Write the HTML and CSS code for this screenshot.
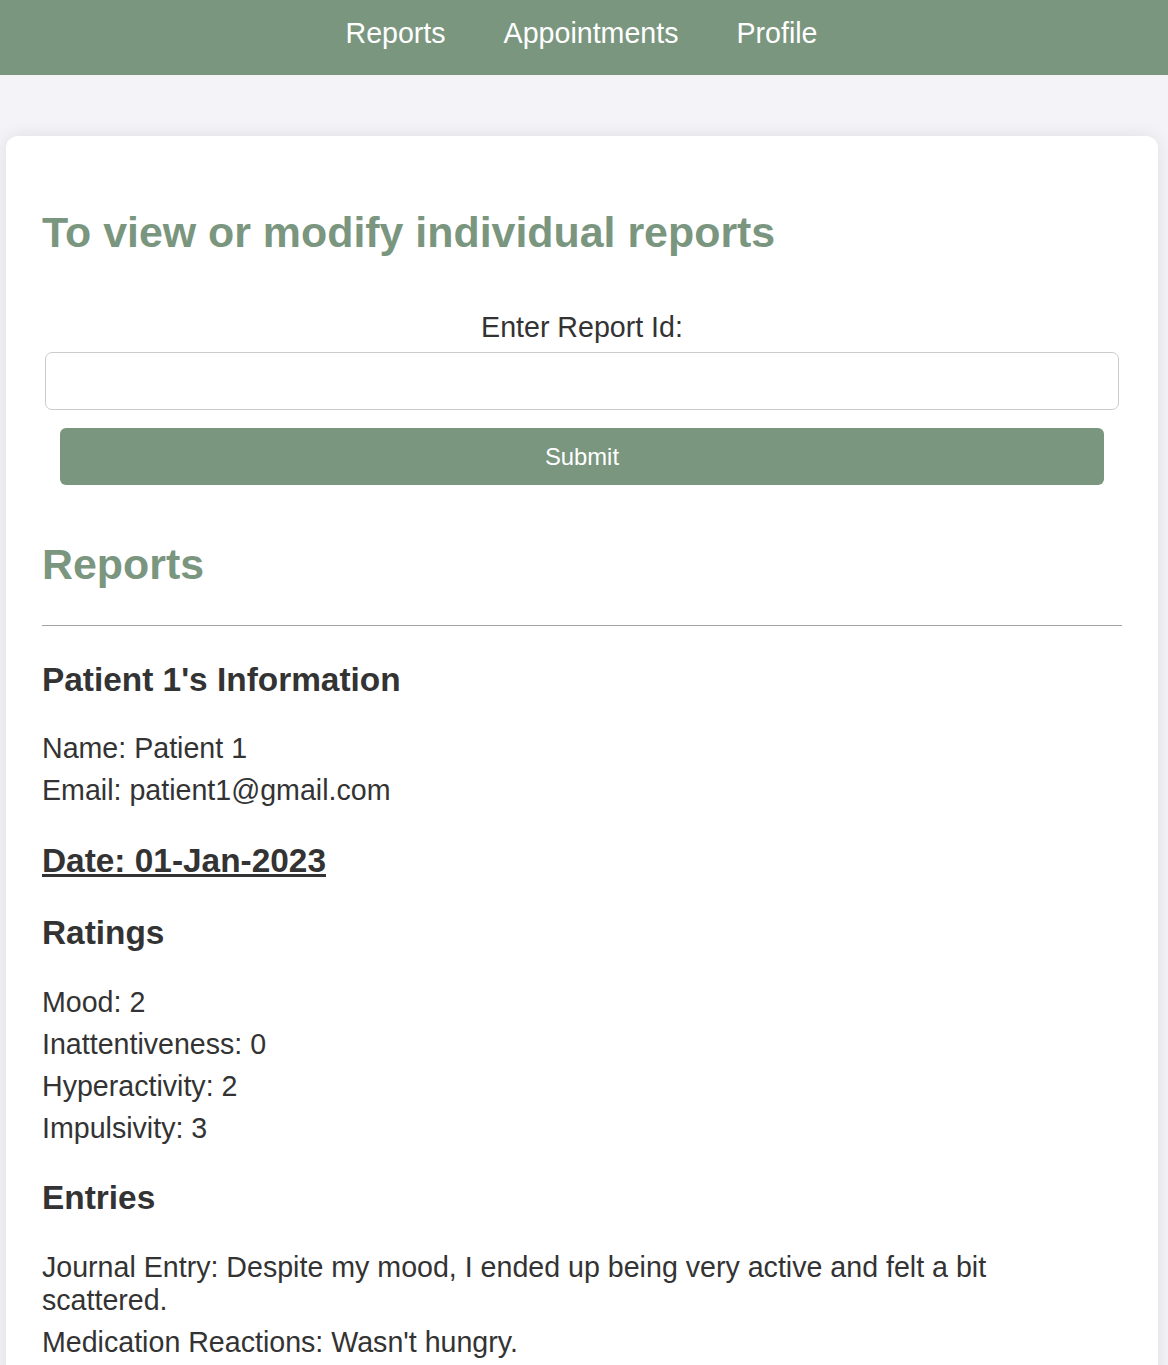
FILE: index.html
```html
<!DOCTYPE html>
<html lang="en">
<head>
<meta charset="utf-8">
<title>Reports</title>
<link rel="stylesheet" href="styles.css">
</head>
<body>
<nav class="topnav">
  <a class="navlink" href="#">Reports</a>
  <a class="navlink" href="#">Appointments</a>
  <a class="navlink" href="#">Profile</a>
</nav>
<main class="card">
  <h2 class="title">To view or modify individual reports</h2>
  <form class="report-form">
    <label class="form-label" for="rid">Enter Report Id:</label>
    <input class="form-input" id="rid" type="text">
    <button class="form-button" type="button">Submit</button>
  </form>
  <h2 class="title title-list">Reports</h2>
  <hr class="divider">
  <h3 class="sub">Patient 1's Information</h3>
  <p class="line">Name: Patient 1</p>
  <p class="line">Email: patient1@gmail.com</p>
  <h3 class="sub date">Date: 01-Jan-2023</h3>
  <h3 class="sub">Ratings</h3>
  <p class="line">Mood: 2</p>
  <p class="line">Inattentiveness: 0</p>
  <p class="line">Hyperactivity: 2</p>
  <p class="line">Impulsivity: 3</p>
  <h3 class="sub">Entries</h3>
  <p class="line">Journal Entry: Despite my mood, I ended up being very active and felt a bit scattered.</p>
  <p class="line">Medication Reactions: Wasn't hungry.</p>
</main>
</body>
</html>
```
FILE: styles.css
```css
html, body {
  margin: 0;
  padding: 0;
}
body {
  background: #f4f4f8;
  font-family: "Liberation Sans", Arial, sans-serif;
  color: #333333;
}
.topnav {
  height: 75px;
  box-sizing: border-box;
  padding: 17px 5px 0 0;
  background: #7a967f;
  display: flex;
  justify-content: center;
  gap: 58px;
}
.navlink {
  color: #ffffff;
  text-decoration: none;
  font-size: 28.6px;
  line-height: 33px;
}
.card {
  margin: 61px 10px 0 6px;
  background: #ffffff;
  border-radius: 12px;
  box-shadow: 0 0 18px rgba(0, 0, 0, 0.09);
  padding: 36px 36px 40px 36px;
}
.title {
  color: #7a967f;
  font-size: 42.9px;
  font-weight: bold;
  margin: 35.6px 0;
  line-height: 49px;
}
.title-list {
  margin-bottom: 36.6px;
}
.report-form {
  display: flex;
  flex-direction: column;
  align-items: stretch;
  margin: 0;
  padding-bottom: 19px;
}
.form-label {
  text-align: center;
  font-size: 28.6px;
  line-height: 33px;
  margin-top: 19px;
}
.form-input {
  margin: 8px 3px 0 3px;
  height: 58px;
  box-sizing: border-box;
  border: 1px solid #cccccc;
  border-radius: 7px;
  background: #ffffff;
  font-size: 24px;
  padding: 0 12px;
}
.form-button {
  margin: 18px 18px 0 18px;
  height: 57px;
  border: none;
  border-radius: 6px;
  background: #7a967f;
  color: #ffffff;
  font-family: "Liberation Sans", Arial, sans-serif;
  font-size: 23.8px;
}
.divider {
  border: none;
  border-top: 1px solid #a3a3a3;
  margin: 0;
}
.sub {
  font-size: 33.4px;
  font-weight: bold;
  line-height: 38px;
  margin: 34.5px 0 33.4px 0;
}
.date {
  text-decoration: underline;
}
.line {
  font-size: 28.6px;
  line-height: 33px;
  margin: 9px 0;
  max-width: 1060px;
}
```
